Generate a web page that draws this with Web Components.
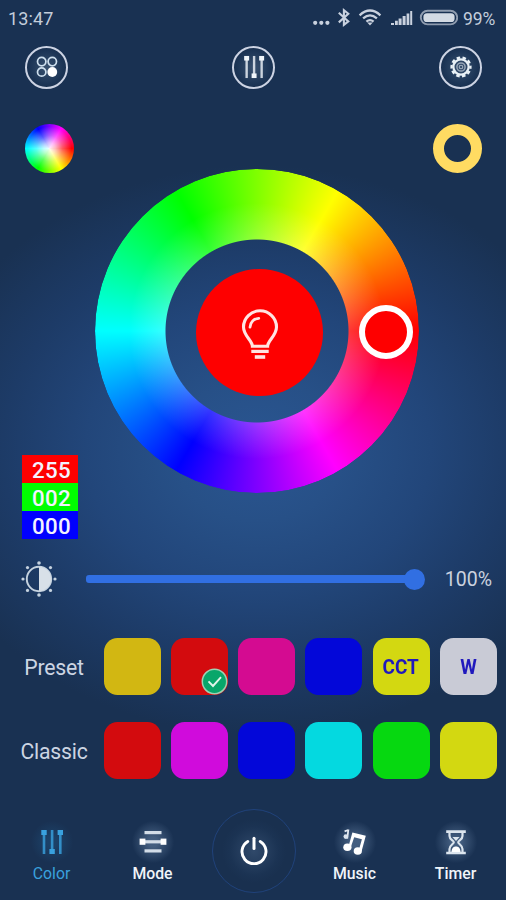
<!DOCTYPE html>
<html lang="en">
<head>
<meta charset="utf-8">
<title>Light control</title>
<style>
html,body{margin:0;padding:0;width:506px;height:900px;overflow:hidden;background:#19304f}
</style>
</head>
<body>
<light-app></light-app>
<script>
const define = (name, render) => customElements.define(name, class extends HTMLElement {
  connectedCallback() {
    if (this.shadowRoot) return;
    this.attachShadow({ mode: 'open' }).innerHTML = render(this);
  }
});

const ICONS = {
  grid: `<svg width="26" height="26" viewBox="-13 -13 26 26" fill="none" stroke="#cfe0ee" stroke-width="1.7"><circle cx="-5.3" cy="-5.4" r="4.2"/><circle cx="5.3" cy="-5.4" r="4.2"/><circle cx="-5.3" cy="5" r="4.2"/><circle cx="5.3" cy="5" r="4.9" fill="#fff" stroke="none"/></svg>`,
  sliders: `<svg width="26" height="28" viewBox="-13 -14 26 28" fill="currentColor"><g opacity=".82"><rect x="-9.3" y="-8" width="2.6" height="20"/><rect x="-1.2" y="-12" width="2.6" height="20"/><rect x="7" y="-8" width="2.6" height="20"/></g><rect x="-10.7" y="-12" width="5.4" height="5"/><rect x="-2.6" y="7" width="5.4" height="5"/><rect x="5.6" y="-12" width="5.4" height="5"/></svg>`,
  gear: `<svg width="26" height="26" viewBox="-13 -13 26 26" fill="none" stroke="#e9f1f6"><circle r="7.6" stroke-width="2.2"/><circle r="9.4" stroke-width="2.4" stroke-dasharray="3.5 2.406" stroke-dashoffset="1.7"/><circle r="4.1" stroke-width="1.5" opacity=".55"/><circle r="1.8" stroke-width="1.1" opacity=".6"/></svg>`,
  bars: `<svg width="28" height="28" viewBox="-14 -14 28 28" fill="#d3dde8"><rect x="-8.5" y="-11" width="17" height="3.2"/><rect x="-11" y="-1.8" width="22" height="3.2"/><rect x="-8.5" y="7.3" width="17" height="3.2"/><rect x="-13.4" y="-3.4" width="5.8" height="6.2" fill="#fff"/><rect x="7.6" y="-3.4" width="5.8" height="6.2" fill="#fff"/></svg>`,
  music: `<svg width="28" height="28" viewBox="-14 -14 28 28" fill="#fff"><path d="M-2.6-9.4 L10.8-6.2 L6.6 9.2 L3.8 8.3 L6.9-2.8 L-.8-4.8 L-4.2 5.3 L-6.5 4.5Z"/><ellipse cx="-7.6" cy="5.3" rx="4.1" ry="3.8"/><ellipse cx="2.8" cy="9" rx="4.1" ry="3.8"/><path d="M-6.6-12.5 L-7.8-3.4 M-6.8-12 L-10.4-10.6" stroke="#e3eaf2" stroke-width="1.8" fill="none"/><circle cx="-9.2" cy="-5.4" r="2.3" fill="#dbe4ee"/></svg>`,
  timer: `<svg width="24" height="28" viewBox="-12 -14 24 28" fill="none" stroke="#dce5ee"><path d="M-9.8-10.4H9.8M-9.8 11H9.8" stroke-width="2.6"/><path d="M-6.5-9.5V-6C-6.5-2-2.2-1.6-2.2 .2S-6.5 3-6.5 7V10M6.5-9.5V-6C6.5-2 2.2-1.6 2.2 .2S6.5 3 6.5 7V10" stroke-width="2.2"/><path d="M-3.6-5H3.6L0-1Z" fill="#dce5ee" stroke="none"/><path d="M-4.6 10C-4.2 5.5-2 4.4 0 4.4S4.2 5.5 4.6 10Z" fill="#fff" stroke="none"/></svg>`,
  power: `<svg width="34" height="34" viewBox="-17 -17 34 34" fill="none" stroke="#fff" stroke-linecap="round"><path d="M-6.2-9.6A12 12 0 1 0 6.2-9.6" stroke-width="2.9"/><path d="M0-12.7V-2.5" stroke-width="3"/></svg>`,
  bulb: `<svg width="40" height="54" viewBox="-20 -27 40 54" fill="none" stroke="#ffe4e2"><path d="M-7.6 12.2C-7.6 6.5-16.5 1.8-16.5-7A16.5 16.2 0 0 1 16.5-7C16.5 1.8 7.6 6.5 7.6 12.2Z" stroke-width="3.1"/><path d="M-10-6.8C-9.8-12-6-15.4-1.2-15.7" stroke-width="2.8" stroke-linecap="round"/><path d="M-8.7 17.4H8.7" stroke-width="3.2"/><path d="M-5.2 23H5.2" stroke-width="3.6"/></svg>`,
  contrast: `<svg width="36" height="36" viewBox="-18 -18 36 36" fill="none" stroke="#c5d2df"><circle r="12.2" stroke-width="1.9"/><path d="M0-12A12 12 0 0 1 0 12Z" fill="#d8e0e8" stroke="none"/><g fill="#c5d2df" stroke="none"><circle cy="-16" r="1.8"/><circle cy="16" r="1.8"/><circle cx="-16" r="1.6"/><circle cx="16" r="1.6"/><circle cx="-11.5" cy="-11.4" r="1.6"/><circle cx="11.5" cy="-11.4" r="1.6"/><circle cx="-11.5" cy="11.4" r="1.6"/><circle cx="11.5" cy="11.4" r="1.6"/></g></svg>`
};

define('ui-icon', el => `<style>:host{display:block;line-height:0}svg{display:block}</style>${ICONS[el.getAttribute('name')]}`);

define('status-bar', () => `<style>
:host{display:flex;box-sizing:border-box;height:37px;align-items:center;padding:0 0 0 8px;color:#c3cddb;font:18px/20px Roboto,sans-serif}
.time{letter-spacing:.15px;flex:1}
svg{display:block;flex:none;margin-top:-1px}.pct{flex:none;box-sizing:border-box;width:48px;font-size:17.5px;letter-spacing:-.1px;padding-left:5px}
</style><span class="time">13:47</span>
<svg width="146" height="26" viewBox="312 5 146 26" fill="#c9d1de"><circle cx="315.2" cy="22.8" r="2.1"/><circle cx="321.3" cy="22.8" r="2.1"/><circle cx="327.4" cy="22.8" r="2.1"/>
<path d="M338.8 12.8L348.3 21.4L343.9 24.9V10.3L348.3 13.8L338.8 22.4" fill="none" stroke="#c9d1de" stroke-width="2.1"/>
<g fill="none" stroke="#c9d1de" stroke-width="2.3"><path d="M359.6 15.3Q370 5.8 380.4 15.3"/><path d="M363.1 18.4Q370 12.4 376.9 18.4"/><path d="M366.4 21.6Q370 18.6 373.6 21.6"/></g><path d="M367.2 22.6H372.8L370 25.5Z"/>
<path d="M391 23h3v2h-3zM395 20.8h2.8V25H395zM398.6 18.4h3V25h-3zM402.6 16h3v9h-3zM406.6 13.6h2.7V25h-2.7zM410.2 11h2v14h-2z"/>
<rect x="420.8" y="10.8" width="36.4" height="13.6" rx="6.8" fill="none" stroke="#8f9caf" stroke-width="1.9"/><rect x="423.4" y="13.2" width="31.2" height="8.8" rx="3.6" fill="#d3dae3"/></svg>
<span class="pct">99%</span>`);

define('round-button', () => `<style>
:host{display:grid;place-items:center;box-sizing:border-box;width:43px;height:43px;border:2px solid #ccd3e3;border-radius:50%;background:radial-gradient(circle,#38516f 0,#1c3556 60%,#19304f 75%);color:#eff5fa}
</style><slot></slot>`);

define('top-actions', () => `<style>
:host{display:flex;justify-content:space-between;align-items:center;box-sizing:border-box;height:61px;padding:0 24px 1px 25px}
.m{transform:scale(.92)}
</style><round-button><ui-icon name="grid"></ui-icon></round-button><round-button><ui-icon class="m" name="sliders"></ui-icon></round-button><round-button><ui-icon name="gear"></ui-icon></round-button>`);

define('color-wheel', () => `<style>
:host{display:grid;width:324px;height:324px}
.ring,.lamp,.thumb{grid-area:1/1}
.ring{border-radius:50%;
 background:radial-gradient(circle,rgba(255,255,255,.34) 70px,rgba(255,255,255,.22) 91px,rgba(255,255,255,0) 128px),conic-gradient(from 90deg,#f00,#f0f,#00f,#0ff,#0f0,#ff0,#f00);
 -webkit-mask:radial-gradient(circle,transparent 91px,#000 92px);mask:radial-gradient(circle,transparent 91px,#000 92px)}
.lamp{display:grid;place-items:center;box-sizing:border-box;padding-top:2px;width:127px;height:127px;border-radius:50%;background:#fe0000;margin:100px 0 0 101px}
.thumb{z-index:1;box-sizing:border-box;width:54px;height:54px;border:6px solid #fff;border-radius:50%;background:#fe0000;margin:136px 0 0 264px}
</style><div class="ring"></div><div class="lamp"><ui-icon name="bulb"></ui-icon></div><div class="thumb"></div>`);

define('rgb-readout', () => `<style>
:host{display:grid;grid-template-rows:repeat(3,28px);width:56px;height:84px;color:#f3f2ff;font:500 22.3px/29px Roboto,sans-serif;letter-spacing:.35px;text-align:right}
span{box-sizing:border-box;padding:1px 7px 0 0;height:28px}
</style><span style="background:#fe0000">255</span><span style="background:#00fe00">002</span><span style="background:#0000fe">000</span>`);

define('wheel-stage', () => `<style>
:host{display:grid;height:447px;grid-template:447px/506px}
.hue,.ringbtn,color-wheel,rgb-readout{grid-area:1/1}
.hue{width:49px;height:49px;margin:26px 0 0 25px;border-radius:50%;background:radial-gradient(circle,rgba(255,255,255,.95) 0,rgba(255,255,255,.72) 6px,rgba(255,255,255,.35) 13px,rgba(255,255,255,0) 22px),conic-gradient(from 90deg,#f00,#ff0,#0f0,#0ff,#00f,#f0f,#f00)}
.ringbtn{box-sizing:border-box;width:49px;height:49px;margin:26px 0 0 433px;border:11.5px solid #ffdb62;border-radius:50%}
color-wheel{margin:71px 0 0 95px}
rgb-readout{margin:357px 0 0 22px}
</style><div class="hue"></div><div class="ringbtn"></div><color-wheel></color-wheel><rgb-readout></rgb-readout>`);

define('brightness-slider', () => `<style>
:host{display:flex;align-items:center;box-sizing:border-box;height:68px;padding:0 14px 0 21px;color:#cbd2df;font:19.5px/24px Roboto,sans-serif}
.track{width:328px;height:7.5px;margin-left:29px;border-radius:3px;background:#316fe2;display:flex;justify-content:flex-end;align-items:center}
.dot{flex:none;width:21px;height:21px;border-radius:50%;background:#316fe2;margin-right:-10.5px}
.v{flex:1;text-align:right;padding-top:1px}
</style><ui-icon name="contrast"></ui-icon><div class="track"><div class="dot"></div></div><span class="v">100%</span>`);

define('color-swatch', el => `<style>
:host{display:grid;place-items:center;width:57px;height:57px;border-radius:13.5px;background:${el.getAttribute('color')};color:#2019bd;font:700 19.5px/24px Roboto,sans-serif;position:relative}
span{padding-top:2px;transform:scaleX(.97)}
svg{position:absolute;right:0;bottom:0;display:block}
</style><span><slot></slot></span>${el.hasAttribute('selected') ? '<svg width="27" height="27" viewBox="0 0 27 27"><circle cx="13.5" cy="13.5" r="12.2" fill="#08a66a" stroke="#9ed1b4" stroke-width="1.5"/><path d="M7.5 13.3L12 18L20 9.2" fill="none" stroke="#e0f4e9" stroke-width="1.9"/></svg>' : ''}`);

define('swatch-row', el => `<style>
:host{display:flex;height:57px;align-items:center;color:#ccd5e3;font:21.2px/26px Roboto,sans-serif}
.l{width:103.5px;box-sizing:border-box;padding-left:4.5px;text-align:center;padding-top:3px;letter-spacing:-.2px}
.s{display:flex;gap:10.25px}
</style><div class="l">${el.getAttribute('label')}</div><div class="s"><slot></slot></div>`);

define('nav-item', el => `<style>
:host{display:flex;flex-direction:column;align-items:center;width:80px;color:${el.hasAttribute('active') ? '#39a1de' : '#f0f4f9'};font:${el.hasAttribute('active') ? 400 : 500} 15.8px/20px Roboto,sans-serif}
.i{display:grid;place-items:center;width:44px;height:44px;border-radius:50%;background:radial-gradient(circle,${el.hasAttribute('active') ? 'rgba(40,130,190,.2)' : 'rgba(150,180,215,.34)'} 15%,transparent 68%)}
</style><div class="i"><ui-icon name="${el.getAttribute('icon')}"></ui-icon></div><slot></slot>`);

define('bottom-nav', () => `<style>
:host{display:grid;box-sizing:border-box;grid-template-columns:103px 99px 104px 97px 105px;justify-items:center;height:92px;padding-top:1px}
nav-item{margin-top:11px}
.p{box-sizing:border-box;width:84px;height:84px;border:1.6px solid #20427a;border-radius:50%;display:grid;place-items:center;background:radial-gradient(circle,#30496a 0,#1b3353 42%,#19304f 55%)}
</style><nav-item icon="sliders" active>Color</nav-item><nav-item icon="bars">Mode</nav-item><div class="p"><ui-icon name="power"></ui-icon></div><nav-item icon="music">Music</nav-item><nav-item icon="timer">Timer</nav-item>`);

define('light-app', () => `<style>
:host{display:flex;flex-direction:column;width:506px;height:900px;overflow:hidden;background:radial-gradient(ellipse 345px 285px at 258px 450px,#2a5692 0,#275087 25%,#22467a 50%,#1d3b67 74%,#193152 100%) #193152}
.rows{display:flex;flex-direction:column;gap:27px;box-sizing:border-box;height:195px;padding-top:25px}
</style><status-bar></status-bar><top-actions></top-actions><wheel-stage></wheel-stage><brightness-slider></brightness-slider>
<div class="rows">
<swatch-row label="Preset"><color-swatch color="#d2b712"></color-swatch><color-swatch color="#d30b0e" selected></color-swatch><color-swatch color="#d40b91"></color-swatch><color-swatch color="#0307d9"></color-swatch><color-swatch color="#d3d811">CCT</color-swatch><color-swatch color="#c9cbd6">W</color-swatch></swatch-row>
<swatch-row label="Classic"><color-swatch color="#d30b0e"></color-swatch><color-swatch color="#d00bdc"></color-swatch><color-swatch color="#0307d9"></color-swatch><color-swatch color="#04d9e0"></color-swatch><color-swatch color="#06d810"></color-swatch><color-swatch color="#d3d811"></color-swatch></swatch-row>
</div><bottom-nav></bottom-nav>`);
</script>
</body>
</html>
